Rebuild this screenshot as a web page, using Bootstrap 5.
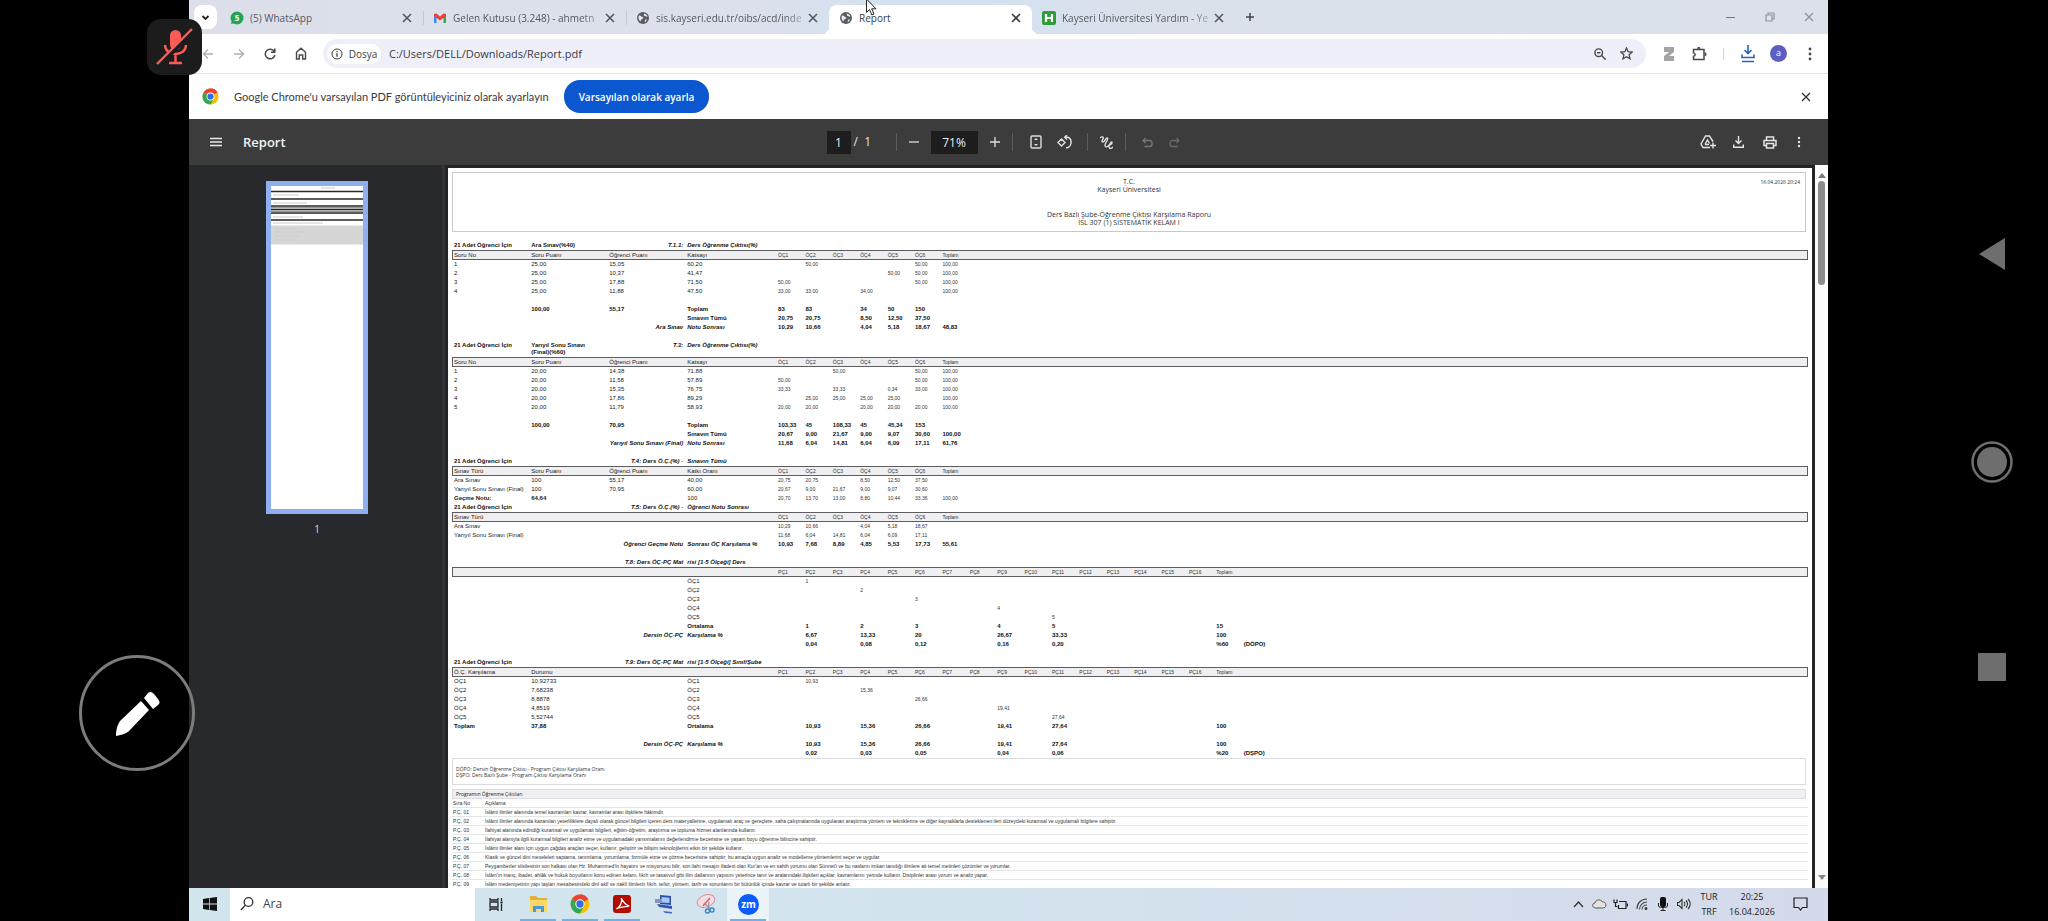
<!DOCTYPE html>
<html lang="tr">
<head>
<meta charset="utf-8">
<meta name="viewport" content="width=device-width, initial-scale=1">
<title>Report</title>
<link href="https://cdn.jsdelivr.net/npm/bootstrap@5.3.0/dist/css/bootstrap.min.css" rel="stylesheet">
<style>
body{background:#000;height:100vh;overflow:hidden;font-family:"Open Sans","Noto Sans",sans-serif;font-size:10px;line-height:14px;color:#3a3b3f}
button,input{font:inherit;color:inherit}
svg{display:block;flex:none}
main{min-width:0}
.plain{background:none;border:0;padding:0;display:inline-flex;align-items:center;justify-content:center;flex:none}
.side-l{flex:0 0 189px}
.side-r{flex:0 0 220px;gap:170px;padding:0 0 4px 108px}
.mic-tile{left:147px;top:19px;width:55px;height:56px;border-radius:14px;background:#1c1c1c;z-index:5}
.pen{left:79px;top:655px;width:116px;height:116px;border-radius:50%;border:3px solid #7c7c7c;z-index:5}
/* tab strip */
.tabstrip{height:34px;background:linear-gradient(90deg,#dcdfea,#dbe1ec 35%,#d3e1f4 45%,#dbe1ea 60%,#dce1e9);padding-left:5px}
.tabmenu{width:23px;height:24px;border-radius:8px;background:#fff;margin-right:3px}
.tabx{flex:0 1 203px;min-width:0;height:29px;padding:0 9px 4px 10px;gap:6px;position:relative;color:#55585e}
.tabx.sep::before{content:"";position:absolute;left:0;top:6px;height:14px;width:1px;background:#c3c8d3}
.tabx a{color:inherit;text-decoration:none;white-space:nowrap;flex:1;margin-right:-6px}
.tabx a.long{-webkit-mask-image:linear-gradient(90deg,#000 85%,rgba(0,0,0,.25))}
.tabx .plain{width:14px;height:14px}
.tabx.on{background:#fff;border-radius:8px 8px 0 0;color:#3a3b3f}
.tabx.on::before,.tabx.on::after{content:"";position:absolute;bottom:0;width:7px;height:7px}
.tabx.on::before{left:-7px;background:radial-gradient(circle at 0 0,transparent 7px,#fff 7px)}
.tabx.on::after{right:-7px;background:radial-gradient(circle at 100% 0,transparent 7px,#fff 7px)}
.newtab{width:30px;height:24px}
.winbtn{width:39px;height:34px;color:#8f9399}
.cursor{left:866px;top:-2px;z-index:6}
/* address row */
.addr{height:40px;background:#fff;border-bottom:1px solid #e2e3ea;padding:1px 3px 0}
.ib{width:31px;height:29px;color:#46484c}
.omni{height:29px;border-radius:15px;background:#efeffa;margin:0 7px;padding:0 6px 0 4px}
.chip{height:20px;width:54px;border-radius:10px;background:#fff;gap:6px;font-size:10px}
.omni input{border:0;background:none;outline:0;font-size:11px;padding:0 0 0 8px;flex:1;min-width:0}
.omni .ib{width:27px}
.hair{width:1px;height:12px;background:#cfd3ee}
.avatar{width:17px;height:17px;border-radius:50%;background:#5b5fc0;color:#fff;font-size:9px;line-height:16px;text-align:center}
/* prompt bar */
.prompt{height:46px;background:#fff;padding:0 7px 0 13px}
.prompt .msg{font-family:Lato,"Open Sans",sans-serif;font-size:11px;margin:0 10px 0 15px;color:#3a3b3f;flex:0 0 320px;white-space:nowrap}
.prompt .cta{background:#0b57d0;color:#fff;border:0;border-radius:16px;height:33px;width:145px;font-size:10px;font-weight:600;padding:0}
/* viewer */
.viewbar{height:46px;background:#3c3c3d;color:#e4e4e4;display:grid;grid-template-columns:1fr auto 1fr;align-items:center}
.viewbar .doc{font-size:13px;font-weight:600;color:#f2f2f2}
.viewbar input{background:#1d1d1e;border:0;height:23px;text-align:center;font-size:12px;color:#eee;padding:0}
.viewbar .pg{width:24px}
.viewbar .zm{width:47px}
.vsep{width:1px;height:18px;background:#5c5c5e}
.of{width:45px;font-size:12px;padding-left:3px}
.w27{width:27px}.w34{width:34px}.w37{width:37px}.w31{width:31px}.w38{width:38px}
.tools{padding-right:3px}
.stage{background:#242427;min-height:0}
.thumbs{flex:0 0 256px;background:#28292c;border-right:3px solid #333236;padding:16px 0 0 3px;color:#ddd}
.thumb{width:102px;height:333px;border:5px solid #8fb0f0;background:#fff}
.sheet{background:#fff;margin:3px 3px 0 3px;padding:4px;min-width:0;overflow:hidden;font-family:"Liberation Sans",Arial,sans-serif;color:#222;font-size:6px;line-height:9px}
.scroll{flex:0 0 13px;background:#fbfbfb;padding:8px 0}
.scroll i{display:block;width:7px;background:#8b8b8b;border-radius:4px;height:104px;margin-top:3px}
.headbox{border:1px solid #c9c9cc;height:60px;margin:0 2px 9px 0;display:grid;grid-template-columns:1fr auto 1fr;font:7px/8px "Open Sans",sans-serif;text-align:center;padding-top:5px;color:#333}
.headbox time{text-align:right;padding-right:5px;font-size:5px}
.headbox .gap{height:17px}
.rep{width:100%;table-layout:fixed;border-collapse:separate;border-spacing:0;margin:0}
.rep td,.rep th{padding:0 2px;height:9px;line-height:9px;white-space:nowrap;font-weight:400;vertical-align:top}
.rep th{height:10px;line-height:8px;background:#efeef1;border-top:1px solid #5d5d60;border-bottom:1px solid #5d5d60}
.rep th:first-child{border-left:1px solid #5d5d60;padding-left:1px}
.rep th:last-child{border-right:1px solid #5d5d60}
.rep .n{font-size:5px;color:#333}
.rep .b td{font-weight:700;font-size:6px;color:#111}
.rep .two td{height:15px;line-height:7px}
.rep .r{text-align:right;font-style:italic}
.rep .it{font-style:italic}
.g10{height:10px}.g9{height:9px}
.note{border:1px solid #dcdce0;height:27px;margin:0 2px 4px 0;padding:7px 3px;font:5px/6px "Open Sans",sans-serif;color:#333}
.pband{background:#f0eff2;border:1px solid #dcdce0;margin-right:2px;height:10px;line-height:8px;padding-left:3px;font-family:"Open Sans",sans-serif;font-size:5px}
.prog{width:100%;table-layout:fixed;border-collapse:separate;border-spacing:0;font-family:"Liberation Sans",Arial,sans-serif;font-size:5px;color:#333;margin:0}
.prog .no{width:32px}
.prog td,.prog th{height:9px;line-height:8px;padding:0 1px;border-bottom:1px solid #e6e6e9;font-weight:400;white-space:nowrap}
/* taskbar */
.taskbar{height:33px;background:linear-gradient(90deg,#d2e6ee,#d3e3ee 50%,#d5daea);color:#222}
.start{width:41px;height:33px}
.find{width:245px;background:#fff;height:33px;padding-left:10px}
.find input{border:0;outline:0;font-size:12px;width:180px;padding:0 0 0 9px;background:none}
.find input::placeholder{color:#444;opacity:1}
.app{width:42px;height:33px;position:relative}
.app.run::after{content:"";position:absolute;left:3px;right:3px;bottom:0;height:2px;background:#6db3e6}
.app.cur{background:#e9f3f8}
.tray{width:21px;height:33px}
.bell{width:48px;height:33px;padding-right:8px}
.lang{font-size:9px;line-height:15px;text-align:center;width:30px}
.clock{width:56px;font-size:9px;line-height:15px;text-align:center}
</style>
</head>
<body class="d-flex">
<svg width="0" height="0" class="position-absolute" aria-hidden="true">
<defs>
<g id="x"><path d="M3 3l8 8M11 3l-8 8" fill="none" stroke="currentColor" stroke-width="1.6"/></g>
<g id="globe"><circle cx="7" cy="7" r="6" fill="#5a5d62"/><path d="M3 4.500c2-.5 2 1 3.500 1.500s1 1.500-.5 2-1 2-1.500 2.500C2.500 9 2 6 3 4.500zM8 2.500c1.500.3 3 1.500 3.500 3-1.500.5-2-.5-2.800-.5S7.500 3.500 8 2.500zM9 8.500l2 .3c-.5 1.200-1.300 2-2.300 2.400z" fill="#e6e9f0"/></g>
<g id="chrome"><circle cx="9" cy="9" r="8.500" fill="#fbbc04"/><path d="M9 9L1.640 4.750A8.500 8.500 0 0 1 16.360 4.750z" fill="#ea4335"/><path d="M9 .5a8.500 8.500 0 0 1 7.360 4.250H9z" fill="#ea4335"/><path d="M9 9L1.640 4.750A8.500 8.500 0 0 0 9 17.500l3.500-6.200z" fill="#34a853"/><circle cx="9" cy="9" r="4.200" fill="#fff"/><circle cx="9" cy="9" r="3.300" fill="#2f6fe0"/></g>
</defs></svg>

<aside class="side-l">
  <button class="plain mic-tile position-absolute" aria-label="Mikrofon kapalı"><svg width="38" height="38" viewBox="0 0 38 38"><rect x="14" y="2" width="11" height="20" rx="5.500" fill="#fc5b57"/><path d="M9 17c0 12 21 12 21 0M19.500 26v8M13 35h13" fill="none" stroke="#fc5b57" stroke-width="2.400"/><path d="M37 3L3 37" stroke="#1c1c1c" stroke-width="5"/><path d="M36 1L1 36" stroke="#fc5b57" stroke-width="2.400"/></svg></button>
  <button class="plain pen position-absolute" aria-label="Kalem"><svg width="50" height="50" viewBox="0 0 50 50" fill="#fff"><path d="M29 13l8 9-19 20c-2 3-8 5-14 6 0-7 2-12 4-15zM32 10l4-5c2-2 4-1 6 1l4 5c2 3 2 4 0 6l-5 4z"/></svg></button>
</aside>

<main class="d-flex flex-column flex-fill">
  <nav class="tabstrip d-flex align-items-end" aria-label="Sekmeler">
    <button class="plain tabmenu align-self-center" aria-label="Sekme ara"><svg width="9" height="9" viewBox="0 0 9 9"><path d="M1.500 3l3 3 3-3" fill="none" stroke="#222" stroke-width="1.800"/></svg></button>
    <div class="tabx d-flex align-items-center"><svg width="14" height="14" viewBox="0 0 14 14"><circle cx="7" cy="7" r="6.500" fill="#23a455"/><path d="M1 13l1-4 3 3z" fill="#23a455"/><text x="7" y="10" font-size="8" font-weight="700" fill="#fff" text-anchor="middle">5</text></svg><a href="#">(5) WhatsApp</a><button class="plain" aria-label="Kapat"><svg width="14" height="14"><use href="#x"/></svg></button></div>
    <div class="tabx sep d-flex align-items-center"><svg width="14" height="14" viewBox="0 0 14 14"><path d="M1 3h2.500v9H1z" fill="#4285f4"/><path d="M10.500 3H13v9h-2.500z" fill="#34a853"/><path d="M1 3l2.500-.5L7 5.500l3.500-3L13 3v2L7 9.500 1 5z" fill="#ea4335"/></svg><a href="#" class="long">Gelen Kutusu (3.248) - ahmetn</a><button class="plain" aria-label="Kapat"><svg width="14" height="14"><use href="#x"/></svg></button></div>
    <div class="tabx sep d-flex align-items-center"><svg width="14" height="14"><use href="#globe"/></svg><a href="#" class="long">sis.kayseri.edu.tr/oibs/acd/inde</a><button class="plain" aria-label="Kapat"><svg width="14" height="14"><use href="#x"/></svg></button></div>
    <div class="tabx on d-flex align-items-center"><svg width="14" height="14"><use href="#globe"/></svg><a href="#">Report</a><button class="plain" aria-label="Kapat"><svg width="14" height="14"><use href="#x"/></svg></button></div>
    <div class="tabx d-flex align-items-center"><svg width="14" height="14" viewBox="0 0 14 14"><rect width="14" height="14" rx="2" fill="#2f9e3a"/><path d="M4 3v8M10 3v8M4 7h6" stroke="#fff" stroke-width="2.200"/></svg><a href="#" class="long">Kayseri Üniversitesi Yardım - Ye</a><button class="plain" aria-label="Kapat"><svg width="14" height="14"><use href="#x"/></svg></button></div>
    <button class="plain newtab align-self-center" aria-label="Yeni sekme"><svg width="10" height="10"><path d="M5 1v8M1 5h8" stroke="#444" stroke-width="1.500"/></svg></button>
    <div class="ms-auto d-flex">
      <button class="plain winbtn" aria-label="Küçült"><svg width="10" height="10"><path d="M0 5.500h9" stroke="#777" stroke-width="1"/></svg></button>
      <button class="plain winbtn" aria-label="Geri yükle"><svg width="10" height="10"><path d="M1 3h6v6H1zM3 3V1h6v6H7" fill="none" stroke="currentColor" stroke-width="1.200"/></svg></button>
      <button class="plain winbtn" aria-label="Kapat"><svg width="10" height="10"><path d="M1 1l8 8M9 1l-8 8" stroke="currentColor" stroke-width="1.200"/></svg></button>
    </div>
  </nav>
  <svg class="cursor position-absolute" width="12" height="19" viewBox="0 0 12 19"><path d="M.5 1v13.500l3-3 2.300 5.500 2.200-1-2.300-5.200H10z" fill="#fff" stroke="#222"/></svg>

  <div class="addr d-flex align-items-center">
    <button class="plain ib" aria-label="Geri"><svg width="12" height="12" viewBox="0 0 12 12" fill="none" stroke="#aeb0b6" stroke-width="1.400"><path d="M11 6H1.500M6 1.500L1.500 6 6 10.500"/></svg></button>
    <button class="plain ib" aria-label="İleri"><svg width="12" height="12" viewBox="0 0 12 12" fill="none" stroke="#aeb0b6" stroke-width="1.400"><path d="M1 6h9.500M6 1.500L10.500 6 6 10.500"/></svg></button>
    <button class="plain ib" aria-label="Yenile"><svg width="12" height="12" viewBox="0 0 12 12" fill="none" stroke="currentColor" stroke-width="1.500"><path d="M10.200 3.500A4.800 4.800 0 1 0 10.800 7M10.800.5v3.700H7"/></svg></button>
    <button class="plain ib" aria-label="Ana sayfa"><svg width="12" height="13" viewBox="0 0 12 13" fill="none" stroke="currentColor" stroke-width="1.400"><path d="M1.500 5.200L6 1.300l4.500 3.900V12H7.700V8H4.300v4H1.500z"/></svg></button>
    <div class="omni d-flex align-items-center flex-fill">
      <button class="plain chip"><svg width="12" height="12" viewBox="0 0 12 12" fill="none" stroke="currentColor"><circle cx="6" cy="6" r="5"/><path d="M6 5.300v3.500M6 3v1.200" stroke-width="1.300"/></svg>Dosya</button>
      <input type="text" value="C:/Users/DELL/Downloads/Report.pdf" aria-label="Adres">
      <button class="plain ib" aria-label="Yakınlaştırma"><svg width="12" height="12" viewBox="0 0 12 12" fill="none" stroke="currentColor" stroke-width="1.400"><circle cx="4.700" cy="4.700" r="3.800"/><path d="M7.600 7.600l4 4M3 4.700h3.400"/></svg></button>
      <button class="plain ib" aria-label="Yer işareti"><svg width="13" height="13" viewBox="0 0 13 13" fill="none" stroke="currentColor" stroke-width="1.300"><path d="M6.500 1l1.600 3.700 4 .4-3 2.700.9 4-3.500-2.100L3 11.800l.9-4-3-2.700 4-.4z"/></svg></button>
    </div>
    <button class="plain ib" aria-label="Zotero"><svg width="12" height="14" viewBox="0 0 12 14"><path d="M1 0h10v5L6 9h5v5H1V9l5-4H1z" fill="#a3a3a5"/></svg></button>
    <button class="plain ib" aria-label="Uzantılar"><svg width="15" height="14" viewBox="0 0 15 14" fill="none" stroke="currentColor" stroke-width="1.500"><path d="M1.500 2.500H12v10H1.500V9.300c2.200-.3 2.200-3.300 0-3.600z"/><path d="M5.500 1.700c.5-1.300 2-1.300 2.500 0M12.800 6c1.300.5 1.300 2 0 2.500"/></svg></button>
    <span class="hair mx-2"></span>
    <button class="plain ib" aria-label="İndirilenler"><svg width="14" height="18" viewBox="0 0 14 18" fill="none" stroke="#2a62b8" stroke-width="1.600"><path d="M7 0v8M3.500 5L7 8.500 10.500 5M1 9.500v3h12v-3M1 16.500h12"/></svg></button>
    <button class="plain ib" aria-label="Profil"><span class="avatar">a</span></button>
    <button class="plain ib" aria-label="Menü"><svg width="4" height="14" fill="currentColor"><circle cx="2" cy="2" r="1.400"/><circle cx="2" cy="7" r="1.400"/><circle cx="2" cy="12" r="1.400"/></svg></button>
  </div>

  <div class="prompt d-flex align-items-center">
    <svg width="17" height="17" viewBox="0 0 18 18"><use href="#chrome"/></svg>
    <span class="msg">Google Chrome'u varsayılan PDF görüntüleyiciniz olarak ayarlayın</span>
    <button class="cta">Varsayılan olarak ayarla</button>
    <button class="plain ms-auto ib" aria-label="Kapat"><svg width="10" height="10"><path d="M1 1l8 8M9 1l-8 8" stroke="#333" stroke-width="1.300"/></svg></button>
  </div>

  <div class="viewbar">
    <div class="d-flex align-items-center"><button class="plain w38 mx-2" aria-label="Kenar çubuğu"><svg width="12" height="10"><path d="M0 1.500h12M0 5h12M0 8.500h12" stroke="#e8e8e8" stroke-width="1.300"/></svg></button><span class="doc">Report</span></div>
    <div class="tools d-flex align-items-center">
      <input type="text" value="1" class="pg" aria-label="Sayfa"><span class="of">/&nbsp; 1</span><span class="vsep"></span>
      <button class="plain w34" aria-label="Uzaklaştır"><svg width="10" height="10"><path d="M0 5h10" stroke="#ddd" stroke-width="1.300"/></svg></button>
      <input type="text" value="71%" class="zm" aria-label="Yakınlık">
      <button class="plain w34" aria-label="Yakınlaştır"><svg width="10" height="10"><path d="M0 5h10M5 0v10" stroke="#ddd" stroke-width="1.300"/></svg></button><span class="vsep me-2"></span>
      <button class="plain w31" aria-label="Sayfaya sığdır"><svg width="12" height="14" viewBox="0 0 12 14"><rect x="1" y="1" width="10" height="12" rx="1" fill="none" stroke="#ddd" stroke-width="1.400"/><path d="M4 5l2-2 2 2zM4 9l2 2 2-2z" fill="#ddd"/></svg></button>
      <button class="plain w27" aria-label="Döndür"><svg width="16" height="14" viewBox="0 0 16 14" fill="none" stroke="#ddd" stroke-width="1.500"><path d="M1 7.500L4.500 4 8 7.500 4.500 11zM8 2c8-1 8 10 1 11M10 0L7.700 2.200 10 4.500"/></svg></button>
      <span class="vsep ms-2"></span>
      <button class="plain w37" aria-label="Çiz"><svg width="13" height="13" viewBox="0 0 13 13" fill="none" stroke="#ddd" stroke-width="1.400"><path d="M0 2c2-2 4-1 3 1S1 6 3 6s3-5 4.500-4S5 7 5 9c0 3 3 2 4.500-.5S12 5 12 7s-4 1-3 4 3 1 4 0"/></svg></button><span class="vsep me-2"></span>
      <button class="plain w27" aria-label="Geri al" disabled><svg width="11" height="11" viewBox="0 0 11 11" fill="none" stroke="#77777a" stroke-width="1.300"><path d="M1 3.500h6.500c3.500 0 3.500 6 0 6H2.500M3.500 1L1 3.500 3.500 6"/></svg></button>
      <button class="plain w27" aria-label="Yinele" disabled><svg width="11" height="11" viewBox="0 0 11 11" fill="none" stroke="#68686b" stroke-width="1.300"><path d="M10 3.500H3.500c-3.500 0-3.500 6 0 6h5M7.500 1L10 3.500 7.500 6"/></svg></button>
    </div>
    <div class="d-flex align-items-center justify-content-end pe-3">
      <button class="plain w31" aria-label="Drive'a kaydet"><svg width="16" height="14" viewBox="0 0 16 14" fill="none" stroke="#e4e4e4" stroke-width="1.400"><path d="M13 6.500L9.500 1h-4L1 9l2 3.500h7M5 9.500l2.500-4.500 2 3.500M5 9.500h4M13 7.500v6M10 10.500h6"/></svg></button>
      <button class="plain w31" aria-label="İndir"><svg width="11" height="12" viewBox="0 0 11 12" fill="none" stroke="#e4e4e4" stroke-width="1.400"><path d="M5.500 0v7M2.500 4.500l3 3 3-3M.7 8.500v2.800h9.600V8.500"/></svg></button>
      <button class="plain w31" aria-label="Yazdır"><svg width="14" height="13" viewBox="0 0 14 13" fill="none" stroke="#e4e4e4" stroke-width="1.500"><path d="M3.500 4V1h7v3M3.500 9.500H1V4.500h12v5h-2.500M3.500 7.500h7V12h-7z"/></svg></button>
      <button class="plain w27" aria-label="Diğer"><svg width="4" height="12" fill="#e4e4e4"><circle cx="2" cy="2" r="1.200"/><circle cx="2" cy="6" r="1.200"/><circle cx="2" cy="10" r="1.200"/></svg></button>
    </div>
  </div>

  <div class="stage d-flex flex-fill">
    <div class="thumbs d-flex flex-column align-items-center">
      <button class="plain thumb align-items-start" aria-label="Sayfa 1"><svg width="92" height="60" viewBox="0 0 92 60"><path d="M0 5.500h92M0 13h92M0 20h92M0 23.500h92M0 27h92M0 34h92" stroke="#28282a" stroke-width="1.500"/><path d="M0 21.700h92M0 25.200h92" stroke="#999" stroke-width="1.500"/><path d="M0 39.500h92v19H0z" fill="#d6d6d7"/><path d="M2 9h26M2 17h34M2 31h30M2 37h50M50 2h14M4 43h22M4 46h30M4 50h26M4 54h20" stroke="#ccc" stroke-width="1"/></svg></button>
      <span class="mt-2">1</span>
    </div>
    <article class="sheet flex-fill">
      <header class="headbox"><span></span><div>T.C.<br>Kayseri Üniversitesi<div class="gap"></div>Ders Bazlı Şube-Öğrenme Çıktısı Karşılama Raporu<br>İSL 307 (1) SİSTEMATİK KELAM I</div><time>16.04.2026 20:24</time></header>
      <div id="report"></div>
      <div class="note">DÖPO: Dersin Öğrenme Çıktısı - Program Çıktısı Karşılama Oranı<br>DŞPO: Ders Bazlı Şube - Program Çıktısı Karşılama Oranı</div>
      <div class="pband">Programın Öğrenme Çıktıları</div>
      <table class="prog"><colgroup><col class="no"><col></colgroup><tbody id="prog"><tr><th>Sıra No</th><th>Açıklama</th></tr></tbody></table>
    </article>
    <div class="scroll d-flex flex-column align-items-center">
      <svg width="8" height="5"><path d="M0 5l4-5 4 5z" fill="#777"/></svg><i></i>
      <svg class="mt-auto" width="8" height="5"><path d="M0 0l4 5 4-5z" fill="#888"/></svg>
    </div>
  </div>

  <footer class="taskbar d-flex align-items-center">
    <button class="plain start" aria-label="Başlat"><svg width="14" height="14" viewBox="0 0 14 14" fill="#111"><path d="M0 2l6-.9v5.500H0zM6.700 1L14 0v6.600H6.700zM0 7.400h6v5.500L0 12zM6.700 7.400H14V14l-7.300-1z"/></svg></button>
    <label class="find d-flex align-items-center"><svg width="14" height="14" viewBox="0 0 14 14" fill="none" stroke="#333" stroke-width="1.300"><circle cx="8.500" cy="5" r="4.300"/><path d="M5.300 8.300L1 13"/></svg><input type="search" placeholder="Ara" aria-label="Ara"></label>
    <button class="plain app" aria-label="Görev görünümü"><svg width="14" height="15" viewBox="0 0 14 15" fill="none" stroke="#222" stroke-width="1.300"><path d="M1 1v2h8V1M1 5h8v5H1zM1 14v-2h8v2M12.500 1v3M12.500 7v7"/><path d="M12.500 4.500v2" stroke-width="2.200"/></svg></button>
    <button class="plain app run" aria-label="Dosya Gezgini"><svg width="19" height="18" viewBox="0 0 19 18"><path d="M1 1h6l2 2h9v14H1z" fill="#e3b23c"/><path d="M1 5h17v12H1z" fill="#fbd968"/><path d="M4 17v-6h11v6h-3v-3H7v3z" fill="#4a9ad8"/></svg></button>
    <button class="plain app run" aria-label="Chrome"><svg width="20" height="20" viewBox="0 0 18 18"><use href="#chrome"/></svg></button>
    <button class="plain app run" aria-label="Acrobat"><svg width="18" height="18" viewBox="0 0 18 18"><rect width="18" height="18" rx="3" fill="#b30b00"/><path d="M3.500 14C7 12 9.500 7 8.500 4s2 5 6.500 6.500S6 11 3.500 14z" fill="none" stroke="#fff" stroke-width="1.300"/></svg></button>
    <button class="plain app" aria-label="Uzak masaüstü"><svg width="19" height="19" viewBox="0 0 19 19"><path d="M5 0l11 1v9L5 9z" fill="#2b4fa8"/><path d="M6.500 2l8 .7V8l-8-.6z" fill="#a9c7f3"/><path d="M0 4h7v4H0z" fill="#8a93b5"/><path d="M2 9l15 2v3L4 12z" fill="#3358b4"/><path d="M5 13l12 1.500V17L8 16z" fill="#d6def0"/><path d="M8 16l9 1v1.500L10 18z" fill="#4a68b8"/></svg></button>
    <button class="plain app" aria-label="Ekran alıntısı"><svg width="20" height="20" viewBox="0 0 20 20" fill="none"><ellipse cx="10" cy="7" rx="9" ry="6" fill="#f5dde3" stroke="#d98a9b" transform="rotate(-20 10 7)"/><path d="M14 4L7 12" stroke="#cc6275" stroke-width="1.500"/><path d="M8 9l7 6M13 8l-1 7" stroke="#999" stroke-width="1.300"/><circle cx="16" cy="16" r="2" stroke="#3f86c6" stroke-width="1.500"/><circle cx="11.500" cy="17" r="2" stroke="#3f86c6" stroke-width="1.500"/></svg></button>
    <button class="plain app cur run" aria-label="Zoom"><svg width="21" height="21" viewBox="0 0 21 21"><circle cx="10.500" cy="10.500" r="10.500" fill="#0b5cff"/><text x="10.500" y="14" font-size="10" font-weight="700" fill="#fff" text-anchor="middle">zm</text></svg></button>
    <div class="ms-auto d-flex align-items-center">
      <button class="plain tray" aria-label="Gizli simgeler"><svg width="11" height="7"><path d="M1 6l4.500-5L10 6" fill="none" stroke="#333" stroke-width="1.300"/></svg></button>
      <button class="plain tray" aria-label="OneDrive"><svg width="15" height="10" viewBox="0 0 15 10"><path d="M4 9C-.5 9 0 4 3 4 4 0 9 0 10.500 3c4-.5 5 6 0 6z" fill="#e6e2dd" stroke="#555"/></svg></button>
      <button class="plain tray" aria-label="Pil"><svg width="15" height="11" viewBox="0 0 15 11" fill="none" stroke="#222" stroke-width="1.200"><path d="M6 2.500h7v7H5.500V6M14.500 4.500v3M1 .5v3h3v-3M2.500 3.500v4h2"/></svg></button>
      <button class="plain tray" aria-label="Wi-Fi"><svg width="12" height="12" viewBox="0 0 12 12" fill="none" stroke="#444" stroke-width="1.100"><path d="M1 11C1 5 5 1 11 1M3.500 11.500C3.500 7 7 4 11 4M6 11.500C6 9 8 7 11 7"/><circle cx="10" cy="10.500" r="1" fill="#222"/></svg></button>
      <button class="plain tray" aria-label="Mikrofon"><svg width="10" height="14" viewBox="0 0 10 14"><rect x="2" width="6" height="10" rx="2" fill="#111"/><path d="M.5 6v3c0 2 9 2 9 0V6M5 10v3.500M2.500 13.500h5" fill="none" stroke="#222"/></svg></button>
      <button class="plain tray" aria-label="Ses"><svg width="14" height="12" viewBox="0 0 14 12" fill="none" stroke="#333" stroke-width="1.100"><path d="M.5 4.500H2L5 1.500v9L2 7.500H.5zM7 4c1 1 1 3 0 4M9 2.500c2 2 2 5 0 7M11 1c3 3 3 7 0 10"/></svg></button>
      <span class="lang">TUR<br>TRF</span><span class="clock">20:25<br>16.04.2026</span>
      <button class="plain bell" aria-label="Bildirimler"><svg width="15" height="14" viewBox="0 0 15 14" fill="none" stroke="#222" stroke-width="1.200"><path d="M1 1h13v9.500H9.500L7.500 13l-2-2.500H1z"/></svg></button>
    </div>
  </footer>
</main>

<aside class="side-r d-flex flex-column align-items-center justify-content-center">
  <button class="plain" aria-label="Geri"><svg width="28" height="34" viewBox="0 0 28 34"><path d="M27 1v32L1 17z" fill="#6e6e6e"/></svg></button>
  <button class="plain" aria-label="Ana ekran"><svg width="42" height="42"><circle cx="21" cy="21" r="19.500" fill="none" stroke="#6e6e6e" stroke-width="2.500"/><circle cx="21" cy="21" r="15" fill="#6e6e6e"/></svg></button>
  <button class="plain" aria-label="Son uygulamalar"><svg width="28" height="28"><rect width="28" height="28" rx="1" fill="#6e6e6e"/></svg></button>
</aside>

<script src="https://cdn.jsdelivr.net/npm/bootstrap@5.3.0/dist/js/bootstrap.bundle.min.js"></script>
<script>
// Row kinds: T title, W two-line title, H head, N values, B bold totals, I italic totals, "-" and "=" blank rows. Cells are split by "|".
const OC = 'ÖÇ1|ÖÇ2|ÖÇ3|ÖÇ4|ÖÇ5|ÖÇ6|Toplam';
const PC = Array.from({length:16},(_,i)=>'PÇ'+(i+1)).join('|')+'|Toplam';
const who = '21 Adet Öğrenci İçin';
const sections = [
 {after:'g10',rows:[
  'T'+who+'|Ara Sınav(%40)|T.1.1:|Ders Öğrenme Çıktısı(%)',
  'HSoru No|Soru Puanı|Öğrenci Puanı|Katsayı|'+OC,
  'N1|25,00|15,05|60,20||50,00||||50,00|100,00',
  'N2|25,00|10,37|41,47|||||50,00|50,00|100,00',
  'N3|25,00|17,88|71,50|50,00|||||50,00|100,00',
  'N4|25,00|11,88|47,50|33,00|33,00||34,00|||100,00',
  '-',
  'B|100,00|55,17|Toplam|83|83||34|50|150',
  'B|||Sınavın Tümü|20,75|20,75||8,50|12,50|37,50',
  'I||Ara Sınav|Notu Sonrası|10,29|10,66||4,04|5,18|18,67|48,83']},
 {after:'g9',rows:[
  'W'+who+'|Yarıyıl Sonu Sınavı<br>(Final)(%60)|T.3:|Ders Öğrenme Çıktısı(%)',
  'HSoru No|Soru Puanı|Öğrenci Puanı|Katsayı|'+OC,
  'N1|20,00|14,38|71,88|||50,00|||50,00|100,00',
  'N2|20,00|11,58|57,89|50,00|||||50,00|100,00',
  'N3|20,00|15,35|76,75|33,33||33,33||0,34|33,00|100,00',
  'N4|20,00|17,86|89,29||25,00|25,00|25,00|25,00||100,00',
  'N5|20,00|11,79|58,93|20,00|20,00||20,00|20,00|20,00|100,00',
  '-',
  'B|100,00|70,95|Toplam|103,33|45|108,33|45|45,34|153',
  'B|||Sınavın Tümü|20,67|9,00|21,67|9,00|9,07|30,60|100,00',
  'I||Yarıyıl Sonu Sınavı (Final)|Notu Sonrası|11,68|6,04|14,81|6,04|6,09|17,11|61,76']},
 {rows:[
  'T'+who+'||T.4: Ders Ö.Ç.(%) -|Sınavın Tümü',
  'HSınav Türü|Soru Puanı|Öğrenci Puanı|Katkı Oranı|'+OC,
  'NAra Sınav|100|55,17|40,00|20,75|20,75||8,50|12,50|37,50',
  'NYarıyıl Sonu Sınavı (Final)|100|70,95|60,00|20,67|9,00|21,67|9,00|9,07|30,60',
  'N<b>Geçme Notu:</b>|<b>64,64</b>||100|20,70|13,70|13,00|8,80|10,44|33,36|100,00']},
 {after:'g9',rows:[
  'T'+who+'||T.5: Ders Ö.Ç.(%) -|Öğrenci Notu Sonrası',
  'HSınav Türü||||'+OC,
  'NAra Sınav||||10,29|10,66||4,04|5,18|18,67',
  'NYarıyıl Sonu Sınavı (Final)||||11,68|6,04|14,81|6,04|6,09|17,11',
  'I||Öğrenci Geçme Notu|Sonrası ÖÇ Karşılama %|10,93|7,68|8,89|4,85|5,53|17,73|55,61']},
 {after:'g9',rows:[
  'T||T.8: Ders ÖÇ-PÇ Mat|risi [1-5 Ölçeği] Ders',
  'H||||'+PC,
  'N|||ÖÇ1||1','N|||ÖÇ2||||2','N|||ÖÇ3||||||3','N|||ÖÇ4|||||||||4','N|||ÖÇ5|||||||||||5',
  'B|||Ortalama||1||2||3|||4||5||||||15',
  'I||Dersin ÖÇ-PÇ|Karşılama %||6,67||13,33||20|||26,67||33,33||||||100',
  'B|||||0,04||0,08||0,12|||0,16||0,20||||||%60|(DÖPO)']},
 {rows:[
  'T'+who+'||T.9: Ders ÖÇ-PÇ Mat|risi [1-5 Ölçeği] Sınıf/Şube',
  'HÖ.Ç. Karşılama|Durumu|||'+PC,
  'NÖÇ1|10,92733||ÖÇ1||10,93',
  'NÖÇ2|7,68238||ÖÇ2||||15,36',
  'NÖÇ3|8,8878||ÖÇ3||||||26,66',
  'NÖÇ4|4,8519||ÖÇ4|||||||||19,41',
  'NÖÇ5|5,52744||ÖÇ5|||||||||||27,64',
  'BToplam|37,88||Ortalama||10,93||15,36||26,66|||19,41||27,64||||||100',
  '=',
  'I||Dersin ÖÇ-PÇ|Karşılama %||10,93||15,36||26,66|||19,41||27,64||||||100',
  'B|||||0,02||0,03||0,05|||0,04||0,06||||||%20|(DŞPO)']}
];
const pct=[5.7,5.75,5.75,6.7].concat(Array(18).fill(2.02));
const cols='<colgroup>'+pct.map(p=>`<col style="width:${p}%">`).join('')+'<col></colgroup>';
document.getElementById('report').innerHTML=sections.map(s=>'<table class="rep">'+cols+s.rows.map(r=>{
  const k=r[0];
  if(k==='-'||k==='=')return `<tr><td colspan="23" class="${k==='='?'g10':'g9'}"></td></tr>`;
  const c=r.slice(1).split('|'); while(c.length<23)c.push('');
  const tag=k==='H'?'th':'td', title=k==='T'||k==='W'||k==='I';
  return `<tr class="${k==='N'||k==='H'?'':'b'}${k==='W'?' two':''}">`+c.map((v,i)=>{
    const cl=title&&i===2?'r':title&&i===3?'it':i>3?'n':'';
    return `<${tag}${cl?` class="${cl}"`:''}>${v}</${tag}>`;}).join('')+'</tr>';
}).join('')+'</table>'+(s.after?`<div class="${s.after}"></div>`:'')).join('');
const outcomes=[
"İslâmi ilimler alanında temel kavramları kavrar, kavramlar arası ilişkilere hâkimdir.",
"İslâmi ilimler alanında kazanılan yeterliliklere dayalı olarak güncel bilgileri içeren ders materyallerine, uygulamalı araç ve gereçlere, saha çalışmalarında uygulanan araştırma yöntem ve tekniklerine ve diğer kaynaklarla desteklenen ileri düzeydeki kuramsal ve uygulamalı bilgilere sahiptir.",
"İlahiyat alanında edindiği kuramsal ve uygulamalı bilgileri, eğitim-öğretim, araştırma ve topluma hizmet alanlarında kullanır.",
"İlahiyat alanıyla ilgili kuramsal bilgileri analiz etme ve uygulamadaki yansımalarını değerlendirme becerisine ve yaşam boyu öğrenme bilincine sahiptir.",
"İslâmi ilimler alanı için uygun çağdaş araçları seçer, kullanır, geliştirir ve bilişim teknolojilerini etkin bir şekilde kullanır.",
"Klasik ve güncel dini meseleleri saptama, tanımlama, yorumlama, formüle etme ve çözme becerisine sahiptir; bu amaçla uygun analiz ve modelleme yöntemlerini seçer ve uygular.",
"Peygamberler silsilesinin son halkası olan Hz. Muhammed'in hayatını ve misyonunu bilir, son ilahi mesajın ifadesi olan Kur'an ve en sahih yorumu olan Sünnet'i ve bu nasların imkan tanıdığı ilimlere ait temel metinleri çözümler ve yorumlar.",
"İslâm'ın inanç, ibadet, ahlâk ve hukuk boyutlarını konu edinen kelam, fıkıh ve tasavvuf gibi ilim dallarının yapısını yeterince tanır ve aralarındaki ilişkileri açıklar, kavramlarını yerinde kullanır. Disiplinler arası yorum ve analiz yapar.",
"İslâm medeniyetinin yapı taşları mesabesindeki dinî aklî ve naklî ilimlerin fıkıh, tefsir, yöntem, tarih ve sorunlarını bir bütünlük içinde kavrar ve tutarlı bir şekilde anlatır."];
document.getElementById('prog').innerHTML+=outcomes.map((t,i)=>`<tr><td>P.Ç. 0${i+1}</td><td>${t}</td></tr>`).join('');
</script>
</body>
</html>
